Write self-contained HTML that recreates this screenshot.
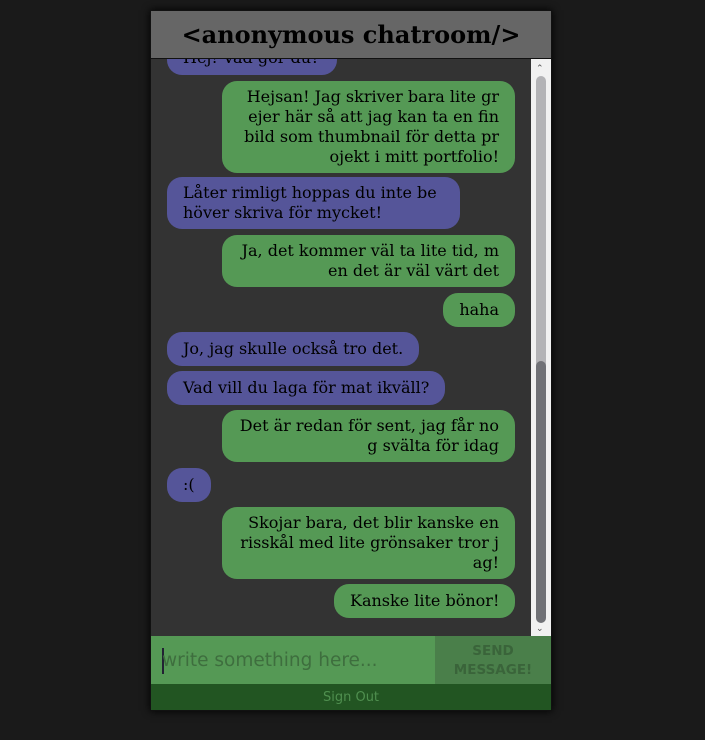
<!DOCTYPE html>
<html><head><meta charset="utf-8"><style>
html,body{margin:0;padding:0;background:#1a1a1a;width:705px;height:740px;overflow:hidden}
#box{position:absolute;left:150px;top:10px;width:400px;height:699px;border:1px solid #111;background:#333;box-shadow:0 0 8px #000}
#hd{position:absolute;left:0;top:0;width:400px;height:47px;background:#666;border-bottom:1px solid #111;font:bold 24px "DejaVu Serif","Liberation Serif",serif;color:#000;text-align:center;line-height:47px}
.b{position:absolute;font:16px/20px "DejaVu Serif","Liberation Serif",serif;color:#000;white-space:nowrap;border-radius:15px;box-sizing:border-box;padding:6px 16px}
.p{background:#555599;left:16px;text-align:left}
.g{background:#559955;right:16px;text-align:right}
#sb{position:absolute;left:380px;top:48px;width:20px;height:577px;background:#f1f1f1}
#in{position:absolute;left:0;top:625px;width:284px;height:48px;background:#559955;font:18.5px "DejaVu Sans","Liberation Sans",sans-serif;color:#3e6e3e;line-height:50px;padding-left:11px;box-sizing:border-box}
#bt{position:absolute;left:284px;top:625px;width:116px;height:48px;background:#4a7f4a;font:bold 13.5px/19px "DejaVu Sans","Liberation Sans",sans-serif;color:#3a643a;text-align:center;padding-top:6px;box-sizing:border-box}
#so{position:absolute;left:0;top:673px;width:400px;height:26px;background:#225522;font:13px/28px "DejaVu Sans","Liberation Sans",sans-serif;color:#4f8f4f;text-align:center}
</style></head><body>
<div id="box">
<div style="position:absolute;left:0;top:48px;width:380px;height:577px;overflow:hidden">
<div class="b p" style="top:-18px;width:170px;padding-top:7px;padding-bottom:7px">Hej! Vad gör du?</div>
<div class="b g" style="top:22px;width:293px">Hejsan! Jag skriver bara lite gr<br>ejer här så att jag kan ta en fin<br>bild som thumbnail för detta pr<br>ojekt i mitt portfolio!</div>
<div class="b p" style="top:118px;width:293px">Låter rimligt hoppas du inte be<br>höver skriva för mycket!</div>
<div class="b g" style="top:176px;width:293px">Ja, det kommer väl ta lite tid, m<br>en det är väl värt det</div>
<div class="b g" style="top:234px;width:72px;padding-top:7px;padding-bottom:7px">haha</div>
<div class="b p" style="top:273px;width:252px;padding-top:7px;padding-bottom:7px">Jo, jag skulle också tro det.</div>
<div class="b p" style="top:312px;width:278px;padding-top:7px;padding-bottom:7px">Vad vill du laga för mat ikväll?</div>
<div class="b g" style="top:351px;width:293px">Det är redan för sent, jag får no<br>g svälta för idag</div>
<div class="b p" style="top:409px;width:44px;padding-top:7px;padding-bottom:7px">:(</div>
<div class="b g" style="top:448px;width:293px">Skojar bara, det blir kanske en<br>risskål med lite grönsaker tror j<br>ag!</div>
<div class="b g" style="top:525px;width:181px;padding-top:7px;padding-bottom:7px">Kanske lite bönor!</div>
</div>
<div id="sb">
<div style="position:absolute;left:5px;top:4px;font:9px sans-serif;color:#555">&#8963;</div>
<div style="position:absolute;left:5px;top:17px;width:10px;height:290px;background:#b3b3b6;border-radius:5px 5px 0 0"></div>
<div style="position:absolute;left:5px;top:302px;width:10px;height:262px;background:#707176;border-radius:5px"></div>
<div style="position:absolute;left:5px;top:564px;font:9px sans-serif;color:#555">&#8964;</div>
</div>
<div id="hd">&lt;anonymous chatroom/&gt;</div>
<div id="in"><span style="display:inline-block;width:2px;height:26px;background:#223;vertical-align:middle;margin-right:-2px"></span>write something here...</div>
<div id="bt">SEND<br>MESSAGE!</div>
<div id="so">Sign Out</div>
</div>
</body></html>
